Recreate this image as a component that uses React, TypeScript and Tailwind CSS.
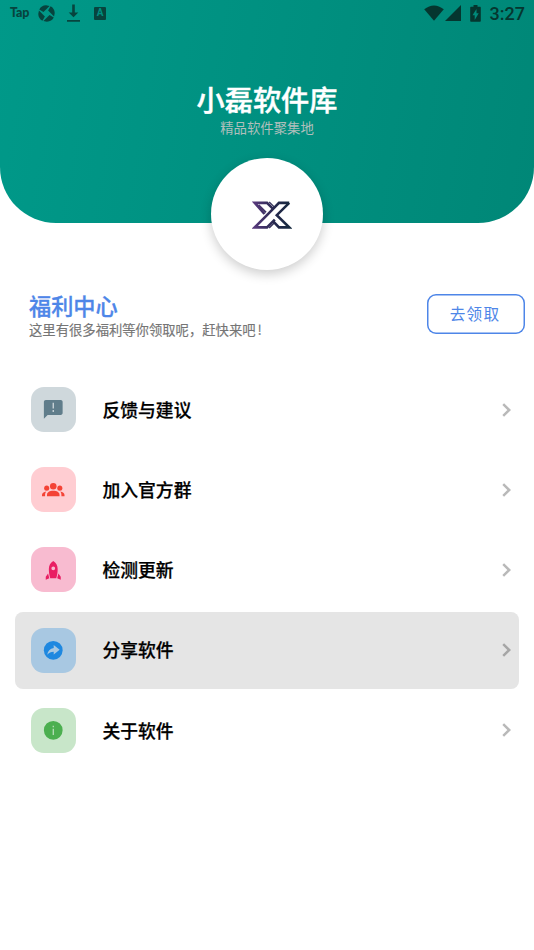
import React from "react";

const items = [
  {
    label: "反馈与建议",
    box: "bg-[#cfd8dc] text-[#607d8b]",
    icon: (
      <path
        fillRule="evenodd"
        d="M20 2H4c-1.100 0-2 .9-2 2v18l4-4h14c1.100 0 2-.9 2-2V4c0-1.100-.9-2-2-2zm-7.300 13h-1.400v-2.200h1.400V15zm0-3.800h-1.400V5h1.400v6.200z"
      />
    ),
  },
  {
    label: "加入官方群",
    box: "bg-[#ffcdd2] text-[#f44336]",
    icon: (
      <>
        <circle cx="12" cy="8.800" r="3.500" />
        <circle cx="5" cy="10.800" r="2.700" />
        <circle cx="19" cy="10.800" r="2.700" />
        <path d="M5.300 19.500v-1.500c0-3 3-4.500 6.700-4.500s6.700 1.500 6.700 4.500v1.500z" />
        <path d="M0 19.500v-1.500c0-2 1.700-3.400 4.600-3.700-.9 1-1.300 2.200-1.300 3.700v1.500zM24 19.500v-1.500c0-2-1.700-3.400-4.600-3.700.9 1 1.300 2.200 1.300 3.700v1.500z" />
      </>
    ),
  },
  {
    label: "检测更新",
    box: "bg-[#f8bbd0] text-[#e91e63]",
    icon: (
      <path
        fillRule="evenodd"
        d="M12 2.200c-3 1.800-4.700 4.700-4.700 8.500 0 3.500.5 6.800 1.500 9.800h6.400c1-3 1.500-6.300 1.500-9.800 0-3.800-1.700-6.700-4.700-8.500zm0 5.700a2 2 0 1 1 0 4 2 2 0 0 1 0-4zM6.500 15.500 4 19v3l3.800-1.500zM17.500 15.500l2.500 3.500v3l-3.800-1.500z"
      />
    ),
  },
  {
    label: "分享软件",
    box: "bg-[#a8c8e2] text-[#1e88e0]",
    active: true,
    icon: (
      <>
        <circle cx="12" cy="12" r="10" />
        <path
          className="fill-[#a8c8e2]"
          d="M12.500 6.500 18.800 11.500l-6.300 5v-3c-3 0-5.200 1-6.900 3.200.5-4 2.900-6.600 6.900-7.200z"
        />
      </>
    ),
  },
  {
    label: "关于软件",
    box: "bg-[#c8e6c9] text-[#4caf50]",
    icon: (
      <path
        fillRule="evenodd"
        d="M12 2a10 10 0 1 0 0 20 10 10 0 0 0 0-20zm.600 15h-1.200v-6.500h1.200V17zm0-8.300h-1.200V7.300h1.200v1.400z"
      />
    ),
  },
];

const StatusBar = () => {
  return (
    <div className="flex h-[26px] items-center justify-between pl-[10px] pr-[9px] text-[#07443e]">
      <div className="flex items-center">
        <span className="w-[20px] font-['Lato'] text-[12.500px] font-black leading-none tracking-[-0.2px]">
          Tap
        </span>
        <svg className="ml-[8px] size-[17px]" viewBox="0 0 18 18" fill="currentColor">
          <path d="M8.500.3C5.300.3 2.500 2.200 1.300 4.700l4.500 2.600L12.300 1zM17.700 8.500c0-3.200-1.900-6-4.400-7.200l-2.600 4.500 6.300 6.500zM9.500 17.700c3.200 0 6-1.900 7.200-4.400l-4.500-2.600L5.700 17zM.3 9.500c0 3.200 1.900 6 4.400 7.200l2.600-4.500L1 5.700z" />
        </svg>
        <svg className="ml-[12px] h-[18px] w-[13px]" viewBox="0 0 13 18" fill="currentColor">
          <path d="M5.200.500h2.600v8h3.500l-4.800 4.800L1.700 8.500h3.500zM0 15.900h13v1.800H0z" />
        </svg>
        <span className="ml-[14px] flex h-[13px] w-[12px] items-center justify-center rounded-[1px] bg-[#07443e] font-['Roboto'] text-[10px] font-bold leading-none text-[#009081]">
          A
        </span>
      </div>
      <div className="flex items-center text-[#05362f]">
        <svg className="h-[16px] w-[20px]" viewBox="0 0 20 16" fill="currentColor">
          <path d="M.2 4.200Q10-3.400 19.800 4.200L10 15.700z" />
        </svg>
        <svg className="ml-px size-[16px]" viewBox="0 0 16 16" fill="currentColor">
          <path d="M0 16 16 0v16z" />
        </svg>
        <svg className="ml-[9px] mr-[0.500px] h-[17px] w-[11px]" viewBox="0 0 11 17" fill="currentColor">
          <path
            fillRule="evenodd"
            d="M3.500 0h4v1.700h2.300c.6 0 1 .4 1 1v13.100c0 .6-.4 1-1 1H1.200c-.6 0-1-.4-1-1V2.700c0-.6.4-1 1-1h2.300zM6.500 4 2.500 10.200h2.200v4.800L8.700 8.300H6.500z"
          />
        </svg>
        <span className="ml-[8px] mt-[2px] font-['Roboto'] text-[18px] font-medium leading-none">
          3:27
        </span>
      </div>
    </div>
  );
};

const Logo = () => {
  return (
    <svg className="ml-[10px] mt-[2px] h-[28px] w-[40px]" viewBox="0 0 40 28" fill="none">
      <defs>
        <linearGradient id="logo" gradientUnits="userSpaceOnUse" x1="0" y1="0" x2="40" y2="0">
          <stop offset="0" stopColor="#5c3a80" />
          <stop offset=".55" stopColor="#27294f" />
          <stop offset="1" stopColor="#13283c" />
        </linearGradient>
      </defs>
      <g stroke="url(#logo)" strokeWidth="2.600">
        <path d="M12.500 13 2.800 1.900H15l5.800 5.800" />
        <path d="M6.500 4 14 11.300" strokeWidth="1.800" />
        <path d="M17.200 1 23 6.600" strokeWidth="1.200" />
        <path d="M37.200 1.900H27L14 15.200 2.800 26.400H15L22.800 18.600" />
        <path d="M37.200 1.900 24.800 14.200 37.200 26.400H27L21 20.200" />
        <path d="M17.200 27 22.500 21.800" strokeWidth="1.200" />
      </g>
    </svg>
  );
};

const App = () => {
  return (
    <div className="h-[950px] w-[534px] overflow-hidden bg-white font-['Noto_Sans_CJK_SC',sans-serif]">
      <div className="h-[222.500px] rounded-b-[56px] bg-linear-[100deg] from-[#009989] to-[#008777]">
        <StatusBar />
        <div className="pt-[55px] text-center">
          <h1 className="text-[28.200px] font-medium leading-[36px] text-white [-webkit-text-stroke:0.4px]">
            小磊软件库
          </h1>
          <p className="mt-px text-[13.400px] leading-[18px] text-[#b0bfbc]">精品软件聚集地</p>
        </div>
      </div>
      <div className="relative mx-auto -mt-[65px] flex size-[112px] items-center justify-center rounded-full bg-white shadow-[0_4px_12px_rgba(0,0,0,0.2)]">
        <Logo />
      </div>

      <div className="mt-[19px] flex h-[50px] items-center justify-between pl-[29px] pr-[9px]">
        <div className="mt-px">
          <h2 className="text-[22.200px] font-medium leading-[30px] text-[#4e86e8] [-webkit-text-stroke:0.3px]">
            福利中心
          </h2>
          <p className="text-[13.330px] leading-[19px] text-[#757575] [-webkit-text-stroke:0.15px]">
            这里有很多福利等你领取呢，赶快来吧<span className="ml-[2px]">!</span>
          </p>
        </div>
        <button className="mt-px h-[40px] w-[98px] rounded-[9px] pr-[2px] text-[15.600px] tracking-[1.300px] text-[#4e86e8] shadow-[inset_0_0_0_1.500px_#4e86e8]">
          去领取
        </button>
      </div>

      <div className="mt-[32.500px] flex flex-col gap-[3.200px] px-[15px]">
        {items.map((item) => (
          <div
            key={item.label}
            className={`flex h-[77px] items-center rounded-[8px] pl-[16px] pr-[8px] ${
              item.active ? "bg-[#e5e5e5]" : ""
            }`}
          >
            <div className={`flex size-[45px] items-center justify-center rounded-[13px] ${item.box}`}>
              <svg className="size-[22.500px]" viewBox="0 0 24 24" fill="currentColor">
                {item.icon}
              </svg>
            </div>
            <span className="-mt-[1.500px] ml-[26.500px] flex-1 text-[17.800px] font-medium leading-[26px] text-black [-webkit-text-stroke:0.25px]">
              {item.label}
            </span>
            <svg
              className={`h-[14px] w-[9px] ${item.active ? "text-[#a6a6a6]" : "text-[#b9b9b9]"}`}
              viewBox="0 0 9 14"
              fill="none"
              stroke="currentColor"
              strokeWidth="2.500"
            >
              <path d="M1.200 1.200 7.200 7l-6 5.800" />
            </svg>
          </div>
        ))}
      </div>
    </div>
  );
};

export default App;
